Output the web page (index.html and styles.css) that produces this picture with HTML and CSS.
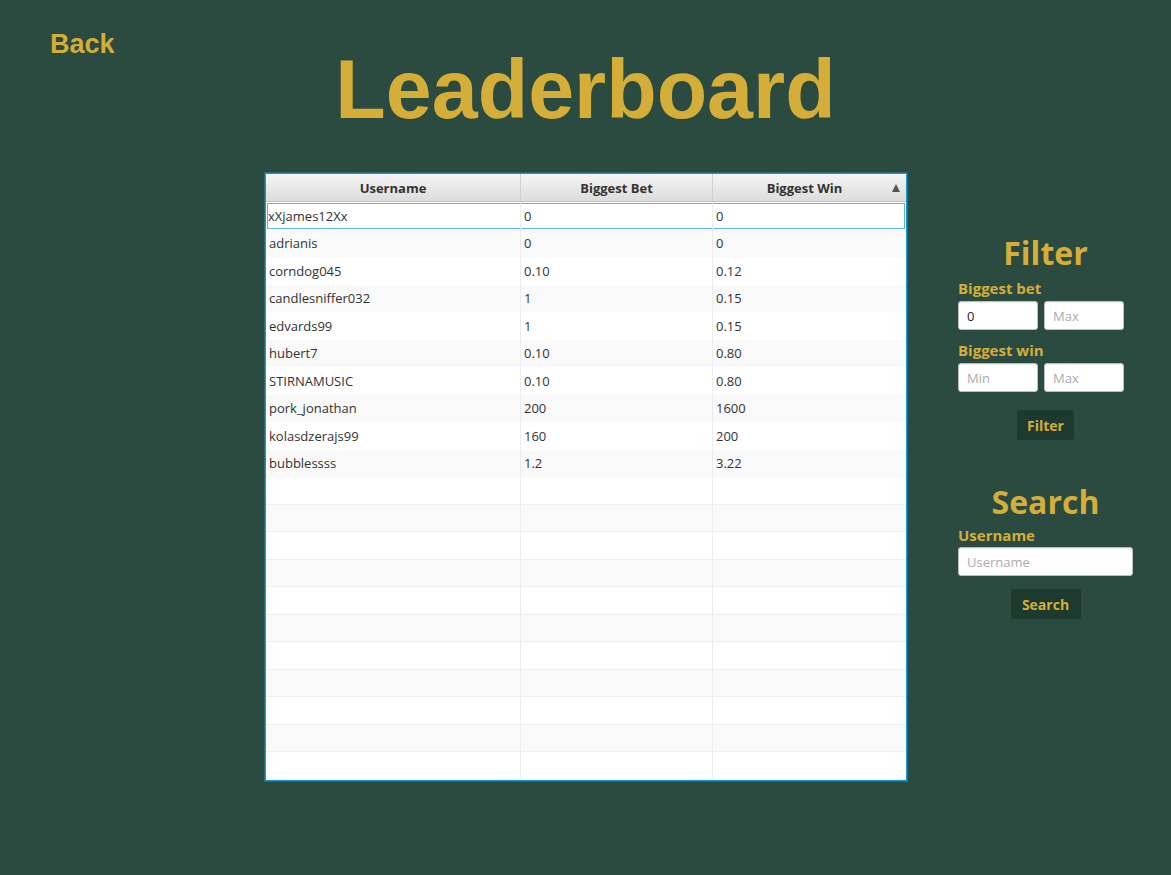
FILE: index.html
```html
<!DOCTYPE html>
<html lang="en">
<head>
<meta charset="utf-8">
<title>Leaderboard</title>
<link rel="stylesheet" href="styles.css">
</head>
<body>
<div class="page">
  <header class="header">
    <a class="back" href="#">Back</a>
    <h1 class="title">Leaderboard</h1>
    <span></span>
  </header>
  <main class="main">
    <div class="table">
      <div class="thead">
        <div class="th">Username</div>
        <div class="th">Biggest Bet</div>
        <div class="th sorted">Biggest Win<span class="arrow"></span></div>
      </div>
      <div class="tbody">
        <div class="row focused"><div class="td">xXjames12Xx</div><div class="td">0</div><div class="td">0</div></div>
        <div class="row"><div class="td">adrianis</div><div class="td">0</div><div class="td">0</div></div>
        <div class="row"><div class="td">corndog045</div><div class="td">0.10</div><div class="td">0.12</div></div>
        <div class="row"><div class="td">candlesniffer032</div><div class="td">1</div><div class="td">0.15</div></div>
        <div class="row"><div class="td">edvards99</div><div class="td">1</div><div class="td">0.15</div></div>
        <div class="row"><div class="td">hubert7</div><div class="td">0.10</div><div class="td">0.80</div></div>
        <div class="row"><div class="td">STIRNAMUSIC</div><div class="td">0.10</div><div class="td">0.80</div></div>
        <div class="row"><div class="td">pork_jonathan</div><div class="td">200</div><div class="td">1600</div></div>
        <div class="row"><div class="td">kolasdzerajs99</div><div class="td">160</div><div class="td">200</div></div>
        <div class="row"><div class="td">bubblessss</div><div class="td">1.2</div><div class="td">3.22</div></div>
        <div class="row empty"><div class="td"></div><div class="td"></div><div class="td"></div></div>
        <div class="row empty"><div class="td"></div><div class="td"></div><div class="td"></div></div>
        <div class="row empty"><div class="td"></div><div class="td"></div><div class="td"></div></div>
        <div class="row empty"><div class="td"></div><div class="td"></div><div class="td"></div></div>
        <div class="row empty"><div class="td"></div><div class="td"></div><div class="td"></div></div>
        <div class="row empty"><div class="td"></div><div class="td"></div><div class="td"></div></div>
        <div class="row empty"><div class="td"></div><div class="td"></div><div class="td"></div></div>
        <div class="row empty"><div class="td"></div><div class="td"></div><div class="td"></div></div>
        <div class="row empty"><div class="td"></div><div class="td"></div><div class="td"></div></div>
        <div class="row empty"><div class="td"></div><div class="td"></div><div class="td"></div></div>
        <div class="row empty"><div class="td"></div><div class="td"></div><div class="td"></div></div>
        <div class="row empty"><div class="td"></div><div class="td"></div><div class="td"></div></div>
      </div>
    </div>
    <aside class="side">
      <h2 class="side-title">Filter</h2>
      <label class="side-label">Biggest bet</label>
      <div class="pair">
        <input class="field" type="text" value="0">
        <input class="field" type="text" placeholder="Max">
      </div>
      <label class="side-label second">Biggest win</label>
      <div class="pair">
        <input class="field" type="text" placeholder="Min">
        <input class="field" type="text" placeholder="Max">
      </div>
      <button class="btn btn-filter" type="button">Filter</button>
      <h2 class="side-title search-title">Search</h2>
      <label class="side-label user-label">Username</label>
      <input class="field wide" type="text" placeholder="Username">
      <button class="btn btn-search" type="button">Search</button>
    </aside>
  </main>
</div>
</body>
</html>
```

FILE: styles.css
```css
* { box-sizing: border-box; }

html, body {
  margin: 0;
  padding: 0;
}

body {
  background: #2b4a40;
  width: 1171px;
  height: 875px;
  overflow: hidden;
  font-family: "Open Sans", "Liberation Sans", sans-serif;
}

.header {
  display: grid;
  grid-template-columns: 1fr auto 1fr;
  padding-top: 29px;
}

.back {
  justify-self: start;
  align-self: start;
  margin-left: 50px;
  margin-top: 2px;
  font-family: "Liberation Sans", Arial, sans-serif;
  font-weight: bold;
  font-size: 27px;
  line-height: 27px;
  color: #d4ae39;
  text-decoration: none;
}

.title {
  margin: 20px 0 0 0;
  font-family: "Liberation Sans", Arial, sans-serif;
  font-weight: bold;
  font-size: 82.6px;
  line-height: 82px;
  color: #d4ae39;
}

.main {
  display: flex;
  align-items: flex-start;
  margin-top: 42px;
  padding-left: 265px;
}

/* ---- table ---- */
.table {
  width: 642px;
  height: 608px;
  border: 1px solid #1398cc;
  box-shadow: 0 0 0 1px rgba(40, 150, 190, 0.45);
  background: #fff;
  overflow: hidden;
  display: flex;
  flex-direction: column;
}

.thead {
  display: grid;
  grid-template-columns: 255px 192px 1fr;
  height: 28px;
  flex: none;
  background: linear-gradient(#f5f5f5, #dcdcdc);
  border-bottom: 1px solid #c4c4c4;
}

.th {
  position: relative;
  display: flex;
  align-items: center;
  justify-content: center;
  font-size: 13px;
  font-weight: bold;
  color: #333;
  border-right: 1px solid #cfcfcf;
}

.th:last-child { border-right: none; }

.th.sorted { padding-right: 10px; }

.arrow {
  position: absolute;
  right: 6px;
  top: 10px;
  width: 0;
  height: 0;
  border-left: 4.5px solid transparent;
  border-right: 4.5px solid transparent;
  border-bottom: 8px solid #555;
}

.tbody {
  flex: 1;
  overflow: hidden;
}

.row {
  display: grid;
  grid-template-columns: 255px 192px 1fr;
  height: 27.5px;
  background: #fff;
}

.row:nth-child(even) { background: #f9f9f9; }

.row.empty { border-bottom: 1px solid #efefef; }

.td {
  display: flex;
  align-items: center;
  padding: 0 3px;
  font-size: 13px;
  color: #333;
  border-right: 1px solid #ececec;
  white-space: nowrap;
}

.td:last-child { border-right: none; }

.row.focused {
  box-shadow: inset 0 0 0 1px #ffffff, inset 0 0 0 2px #5cb5da;
}

.row.focused .td { padding-top: 1px; }
.row.focused .td:first-child { padding-left: 2px; }

/* ---- side panel ---- */
.side {
  width: 175px;
  margin-left: 51px;
  margin-top: 60px;
  display: flex;
  flex-direction: column;
  align-items: flex-start;
}

.side-title {
  align-self: center;
  margin: 0;
  font-size: 32px;
  line-height: 40px;
  font-weight: bold;
  color: #d4ae39;
}

.side-label {
  margin-top: 6px;
  font-size: 15px;
  line-height: 18px;
  font-weight: bold;
  color: #d4ae39;
}

.side-label.second { margin-top: 11px; }

.pair {
  display: flex;
  gap: 6px;
  margin-top: 4px;
}

.field {
  width: 80px;
  height: 29px;
  padding: 0 8px;
  border: 1px solid #bfbfbf;
  border-radius: 3px;
  background: #fff;
  box-shadow: inset 0 1px 1px rgba(0, 0, 0, 0.06);
  font-family: "Open Sans", "Liberation Sans", sans-serif;
  font-size: 13px;
  color: #222;
  outline: none;
}

.field::placeholder { color: #ababab; }

.field.wide {
  width: 175px;
  margin-top: 3px;
}

.btn {
  align-self: center;
  height: 30px;
  border: none;
  border-radius: 3px;
  background: #1e3a2f;
  color: #d4ae39;
  font-family: "Open Sans", "Liberation Sans", sans-serif;
  font-weight: bold;
  font-size: 14px;
  padding: 0 10px;
  cursor: pointer;
}

.btn-filter {
  margin-top: 18px;
  width: 57px;
}

.search-title { margin-top: 42px; }

.user-label { margin-top: 4px; }

.btn-search {
  margin-top: 13px;
  width: 70px;
}
```
